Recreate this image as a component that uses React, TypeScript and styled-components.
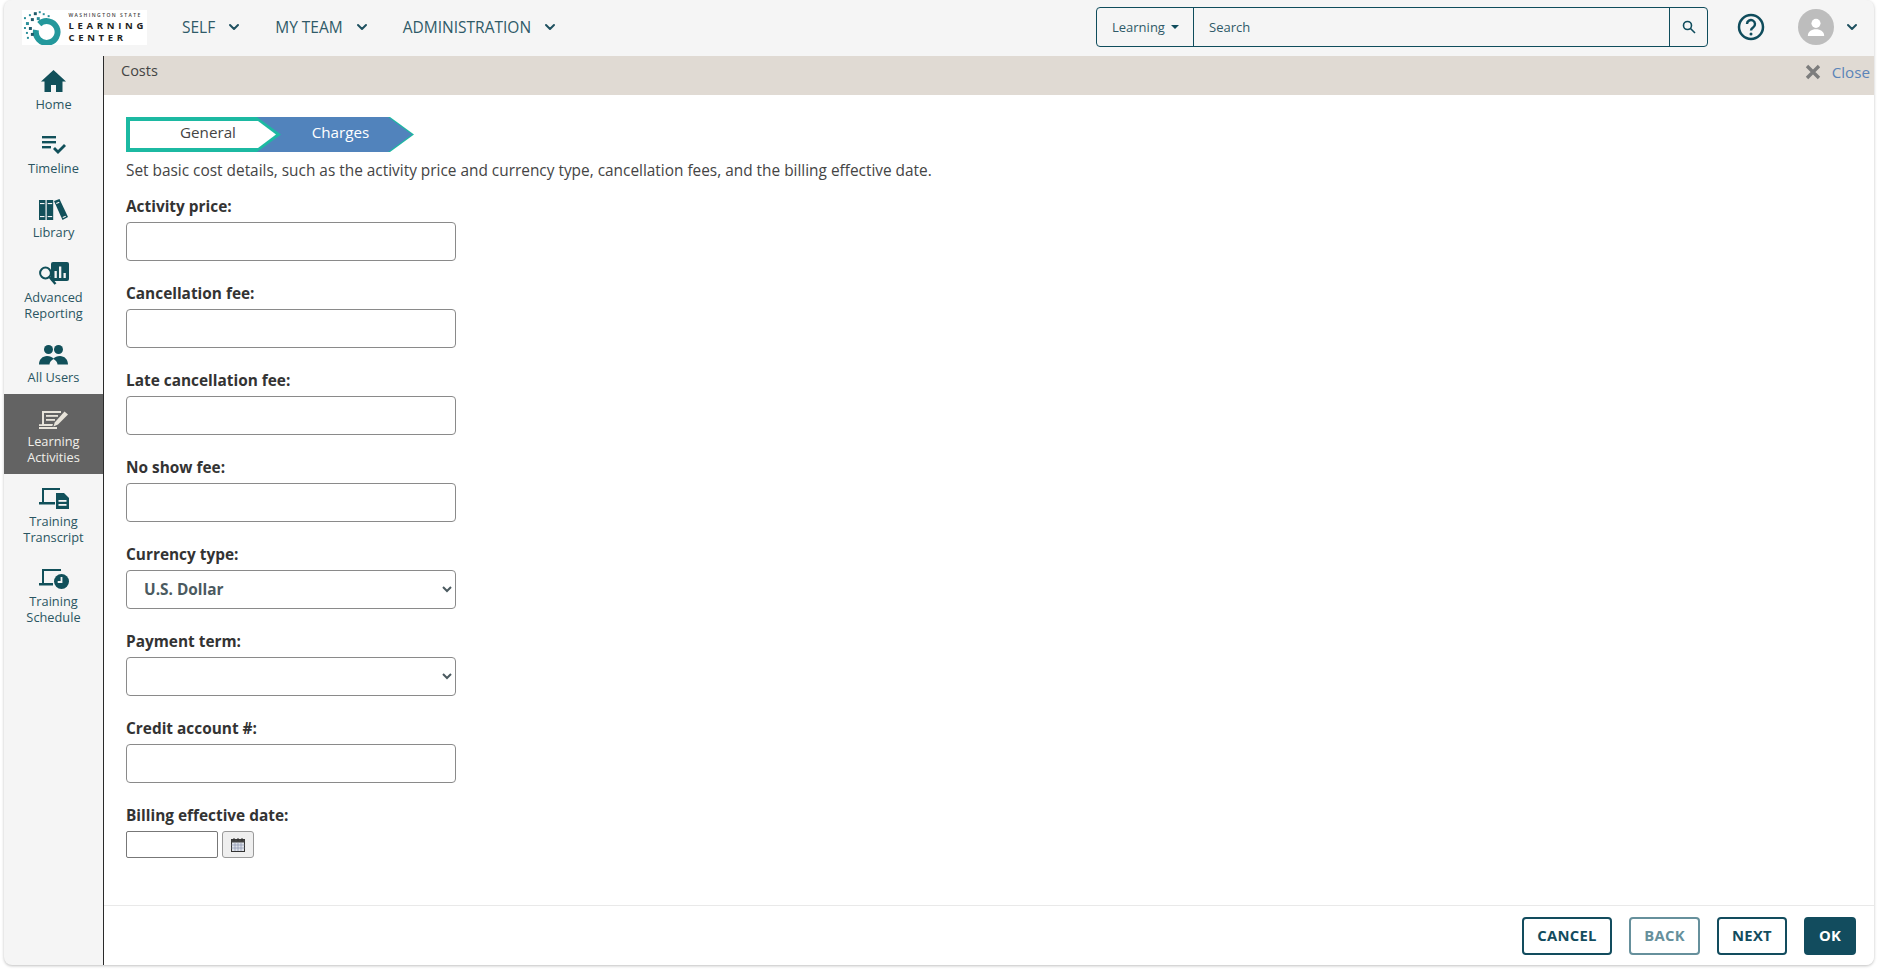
import React from "react";
import styled, { createGlobalStyle } from "styled-components";

const Global = createGlobalStyle`
  html, body { margin: 0; padding: 0; background: #fff; height: 100%; overflow: hidden; }
  body { font-family: "Open Sans", "Noto Sans", sans-serif; color: #333; }
  * { box-sizing: border-box; }
`;

const teal = "#0f4c5c";
const dark = "#11505a";

const Frame = styled.div`
  margin: 0 4px 0 4px;
  height: 965px;
  background: #f5f5f5;
  border-radius: 8px;
  box-shadow: 0 1px 3px rgba(0,0,0,.25);
  display: flex;
  flex-direction: column;
  overflow: hidden;
`;
const Header = styled.header`
  height: 56px;
  flex: none;
  display: flex;
  align-items: center;
  padding-left: 18px;
`;
const LogoBox = styled.div`
  width: 125px;
  height: 35px;
  margin-top: -2px;
  background: #fff;
  display: flex;
  align-items: flex-start;
`;
const LogoText = styled.div`
  margin-left: 1px;
  padding-top: 2px;
  display: flex;
  flex-direction: column;
  color: #222;
`;
const LogoSmall = styled.span`
  font-size: 5px;
  line-height: 6px;
  height: 8px;
  font-weight: 600;
  letter-spacing: 1.45px;
  white-space: nowrap;
  color: #444;
`;
const LogoBig = styled.span`
  font-size: 9.5px;
  line-height: 12px;
  font-weight: 700;
  letter-spacing: 3.7px;
  white-space: nowrap;
`;
const Nav = styled.nav`
  display: flex;
  margin-left: 35px;
  gap: 35px;
`;
const NavItem = styled.div`
  display: flex;
  align-items: center;
  gap: 13px;
  font-size: 15.5px;
  color: #2f5a68;
  margin-top: -3px;
`;
const Right = styled.div`
  margin-left: auto;
  display: flex;
  align-items: center;
  padding-right: 16px;
`;
const SearchBox = styled.div`
  width: 612px;
  height: 40px;
  border: 1px solid ${teal};
  border-radius: 4px;
  display: flex;
  align-items: stretch;
  font-size: 13px;
  color: #2f5a68;
  margin-top: -3px;
`;
const Scope = styled.div`
  width: 97px;
  border-right: 1px solid ${teal};
  display: flex;
  align-items: center;
  padding-left: 15px;
  gap: 6px;
`;
const Caret = styled.span`
  width: 0;
  height: 0;
  border-left: 4px solid transparent;
  border-right: 4px solid transparent;
  border-top: 4px solid ${teal};
`;
const SearchInput = styled.div`
  flex: 1;
  display: flex;
  align-items: center;
  padding-left: 15px;
`;
const SearchBtn = styled.div`
  width: 38px;
  border-left: 1px solid ${teal};
  display: flex;
  align-items: center;
  justify-content: center;
`;
const HelpWrap = styled.div`
  margin-left: 29px;
  margin-top: -3px;
  width: 28px;
  height: 28px;
`;
const Avatar = styled.div`
  margin-left: 33px;
  margin-top: -3px;
  width: 36px;
  height: 36px;
  border-radius: 50%;
  background: #bdbdbd;
  display: flex;
  align-items: center;
  justify-content: center;
  overflow: hidden;
`;
const AvatarChevron = styled.div`
  margin-left: 12px;
  margin-top: -3px;
  display: flex;
`;
const Body = styled.div`
  flex: 1;
  min-height: 0;
  display: flex;
`;
const Sidebar = styled.aside`
  width: 100px;
  flex: none;
  padding-top: 2px;
  border-right: 1px solid #2a2a2a;
  display: flex;
  flex-direction: column;
`;
const SideItem = styled.div<{ $active?: boolean; $tall?: boolean; $tight?: boolean }>`
  height: ${(p) => (p.$tall ? 80 : 64)}px;
  padding-top: ${(p) => (p.$tight ? 9 : 10)}px;
  display: flex;
  flex-direction: column;
  align-items: center;
  text-align: center;
  font-size: 12.8px;
  line-height: 16px;
  background: ${(p) => (p.$active ? "#636363" : "transparent")};
  color: ${(p) => (p.$active ? "#f0efea" : "#2a5562")};
`;
const SideIcon = styled.div`
  height: 25px;
  margin-bottom: 4px;
  display: flex;
  align-items: flex-end;
  justify-content: center;
  svg { display: block; }
`;
const Main = styled.main`
  flex: 1;
  min-width: 0;
  background: #fff;
  display: flex;
  flex-direction: column;
`;
const TitleBar = styled.div`
  height: 39px;
  flex: none;
  background: #e0dad3;
  display: flex;
  align-items: flex-start;
  padding: 5px 4px 0 17px;
  font-size: 14.5px;
  color: #444;
`;
const CloseBtn = styled.div`
  margin-left: auto;
  display: flex;
  align-items: center;
  gap: 11px;
  color: #5b84b8;
  font-size: 15.2px;
  padding-top: 1px;
`;
const Content = styled.div`
  flex: 1;
  min-height: 0;
  padding: 22px 22px 0;
`;
const Steps = styled.div`
  display: flex;
  height: 35px;
`;
const StepOuter = styled.div<{ $w: number; $back?: boolean }>`
  width: ${(p) => p.$w}px;
  height: 35px;
  background: #1cb9a2;
  clip-path: polygon(0 0, calc(100% - 24px) 0, 100% 50%, calc(100% - 24px) 100%, 0 100%);
  position: relative;
  z-index: ${(p) => (p.$back ? 1 : 2)};
  margin-left: ${(p) => (p.$back ? -24 : 0)}px;
`;
const StepInner = styled.div<{ $current?: boolean }>`
  height: ${(p) => (p.$current ? 35 : 27)}px;
  width: calc(100% - ${(p) => (p.$current ? 2 : 9)}px);
  margin: ${(p) => (p.$current ? "0" : "4px 0 0 4px")};
  background: ${(p) => (p.$current ? "#5183bc" : "#fff")};
  color: ${(p) => (p.$current ? "#fff" : "#444")};
  clip-path: polygon(0 0, calc(100% - ${(p) => (p.$current ? 24 : 18)}px) 0, 100% 50%, calc(100% - ${(p) => (p.$current ? 24 : 18)}px) 100%, 0 100%);
  display: flex;
  align-items: center;
  justify-content: center;
  font-size: 15.2px;
  padding: ${(p) => (p.$current ? "0 0 5px 12px" : "0 0 5px 10px")};
`;
const Intro = styled.p`
  margin: 8px 0 0;
  font-size: 15.4px;
  line-height: 22px;
  color: #444;
`;
const Form = styled.div`
  padding-top: 7px;
`;
const Field = styled.div`
  margin-top: 7px;
  height: 80px;
  display: flex;
  flex-direction: column;
`;
const Label = styled.label`
  font-size: 15.4px;
  font-weight: 700;
  line-height: 20px;
  color: #333;
  height: 26px;
  padding-top: 1px;
`;
const TextInput = styled.input`
  width: 330px;
  height: 39px;
  border: 1px solid #8a8a8a;
  border-radius: 4px;
  background: #fff;
  padding: 0 12px;
`;
const Select = styled.select`
  width: 330px;
  height: 39px;
  border: 1px solid #8a8a8a;
  border-radius: 4px;
  background: #fff;
  padding: 0 13px;
  font: 700 15.4px "Open Sans", sans-serif;
  color: #4b5a60;
`;
const DateRow = styled.div`
  display: flex;
  gap: 4px;
`;
const DateInput = styled.input`
  width: 92px;
  height: 27px;
  border: 1px solid #777;
  border-radius: 2px;
  background: #fff;
`;
const CalBtn = styled.div`
  width: 32px;
  height: 27px;
  border: 1px solid #999;
  border-radius: 3px;
  background: #efefef;
  display: flex;
  align-items: center;
  justify-content: center;
`;
const Footer = styled.footer`
  height: 60px;
  flex: none;
  border-top: 1px solid #e9e9e9;
  display: flex;
  align-items: flex-start;
  justify-content: flex-end;
  gap: 17px;
  padding: 11px 18px 0 0;
`;
const Btn = styled.button<{ $w: number; $primary?: boolean; $disabled?: boolean }>`
  width: ${(p) => p.$w}px;
  height: 38px;
  border-radius: 4px;
  border: 2px solid ${(p) => (p.$disabled ? "#66909c" : "#124c5e")};
  background: ${(p) => (p.$primary ? "#124c5e" : "#fff")};
  color: ${(p) => (p.$primary ? "#fff" : p.$disabled ? "#66909c" : "#124c5e")};
  font: 700 14.8px "Open Sans", sans-serif;
  letter-spacing: .3px;
  padding: 0 0 2px;
`;

const Chevron = ({ color = "#1f5160", size = 12 }: { color?: string; size?: number }) => (
  <svg width={size} height={size} viewBox="0 0 12 12" fill="none" stroke={color} strokeWidth="2" strokeLinecap="round" strokeLinejoin="round">
    <path d="M2 4l4 4 4-4" />
  </svg>
);

const Logo = () => (
  <svg width="46" height="35" viewBox="0 0 46 35">
    <path d="M17.500 14A11 11 0 1 1 14.200 20" fill="none" stroke="#23989c" strokeWidth="6" />
    <g fill="#2b8f9a">
      <rect x="12" y="2" width="3" height="3" fill="#1f5a6a" />
      <rect x="7" y="4" width="2" height="2" />
      <rect x="17" y="1" width="2" height="2" />
      <rect x="21" y="3" width="2" height="2" />
      <rect x="26" y="5" width="2" height="2" />
      <rect x="2" y="7" width="2" height="2" />
      <rect x="9" y="8" width="3" height="3" fill="#1f5a6a" />
      <rect x="15" y="7" width="3" height="3" />
      <rect x="4" y="12" width="3" height="3" />
      <rect x="2" y="17" width="2" height="2" />
      <rect x="7" y="17" width="3" height="3" fill="#1f5a6a" />
      <rect x="4" y="22" width="2" height="2" />
      <rect x="9" y="23" width="3" height="3" fill="#1f5a6a" />
      <rect x="5" y="27" width="2" height="2" />
    </g>
  </svg>
);

const icons: Record<string, React.ReactNode> = {
  home: (
    <svg width="25" height="22" viewBox="0 0 25 22" fill={dark}>
      <path d="M12.500 0L0 11.500h3.500V22h6.500v-7h5v7h6.500V11.500H25z" />
    </svg>
  ),
  timeline: (
    <svg width="24" height="20" viewBox="0 0 24 20" fill={dark}>
      <rect x="0" y="0" width="14" height="2.400" />
      <rect x="0" y="5" width="14" height="2.400" />
      <rect x="0" y="10" width="9" height="2.400" />
      <path d="M11 13l2-2 3 3 6-6 2 2-8 8z" />
    </svg>
  ),
  library: (
    <svg width="29" height="21" viewBox="0 0 29 21" fill={dark}>
      <path d="M0 1h6.500v20H0zM7.700 1h6.500v20H7.700z" />
      <path d="M15 2l5.500-2 8.500 18-5.500 3z" />
      <g fill="#f5f5f5">
        <rect x="1" y="4" width="4.500" height="1.100" />
        <rect x="8.700" y="4" width="4.500" height="1.100" />
        <rect x="1" y="17" width="4.500" height="1.100" />
        <rect x="8.700" y="17" width="4.500" height="1.100" />
        <path d="M17 4l3-1.300.5 1.100-3 1.300zM23.500 18l3-1.300.5 1.100-3 1.300z" />
      </g>
    </svg>
  ),
  reporting: (
    <svg width="30" height="23" viewBox="0 0 30 23">
      <rect x="12" y="0" width="18" height="19" rx="2" fill={dark} />
      <g fill="#f5f5f5">
        <rect x="15.500" y="9" width="2.300" height="7" />
        <rect x="20" y="4.500" width="2.300" height="11.500" />
        <rect x="24.500" y="11" width="2.300" height="5" />
      </g>
      <circle cx="6.500" cy="11" r="5.400" fill="#f5f5f5" stroke={dark} strokeWidth="2" />
      <path d="M10.500 15l6 7" stroke={dark} strokeWidth="2.400" />
    </svg>
  ),
  users: (
    <svg width="29" height="20" viewBox="0 0 29 20" fill={dark}>
      <circle cx="9.500" cy="4.500" r="4.500" />
      <circle cx="19.500" cy="4.500" r="4.500" />
      <path d="M0 19.500c0-5 3.500-8.500 8-8.500 3 0 5 1 6.500 2.500C16 12 18 11 21 11c4.500 0 8 3.500 8 8.500H18.500c0-2-1.500-4-4-5.500-2.500 1.500-4 3.500-4 5.500z" />
    </svg>
  ),
  activities: (
    <svg width="30" height="18" viewBox="0 0 30 18">
      <path d="M3 0h19v2H5v11h9l-.7 2H0v-1.800h3z M16 16h2v2H0v-2z" fill="#e8e4da" />
      <g fill="#e8e4da">
        <rect x="7" y="4" width="12" height="1.800" />
        <rect x="7" y="8" width="9" height="1.800" />
      </g>
      <path d="M14.500 15.500l1.200-4L25.500.5l3.500 3L19 13.500z" fill="#e8e4da" />
    </svg>
  ),
  transcript: (
    <svg width="30" height="21" viewBox="0 0 30 21">
      <path d="M3 0h18v2H5v12h11v2.500H0v-2.500h3z" fill={dark} />
      <path d="M17 5h8l5 5v11H17z" fill={dark} />
      <rect x="19.500" y="12" width="8" height="1.800" fill="#f5f5f5" />
      <rect x="19.500" y="16" width="8" height="1.800" fill="#f5f5f5" />
    </svg>
  ),
  schedule: (
    <svg width="30" height="20" viewBox="0 0 30 20">
      <path d="M3 0h19v2H5v12h9v2.500H0v-2.500h3z" fill={dark} />
      <circle cx="22.500" cy="12.500" r="7.500" fill={dark} />
      <path d="M22.500 8V13h-3.800" fill="none" stroke="#f5f5f5" strokeWidth="1.800" />
    </svg>
  ),
};

const sideItems: { key: string; lines: string[]; active?: boolean; tight?: boolean }[] = [
  { key: "home", lines: ["Home"], tight: true },
  { key: "timeline", lines: ["Timeline"], tight: true },
  { key: "library", lines: ["Library"], tight: true },
  { key: "reporting", lines: ["Advanced", "Reporting"] },
  { key: "users", lines: ["All Users"] },
  { key: "activities", lines: ["Learning", "Activities"], active: true },
  { key: "transcript", lines: ["Training", "Transcript"] },
  { key: "schedule", lines: ["Training", "Schedule"] },
];

const textFieldsTop = ["Activity price:", "Cancellation fee:", "Late cancellation fee:", "No show fee:"];

export default function App() {
  return (
    <>
      <Global />
      <Frame>
        <Header>
          <LogoBox>
            <Logo />
            <LogoText>
              <LogoSmall>WASHINGTON STATE</LogoSmall>
              <LogoBig>LEARNING</LogoBig>
              <LogoBig>CENTER</LogoBig>
            </LogoText>
          </LogoBox>
          <Nav>
            {["SELF", "MY TEAM", "ADMINISTRATION"].map((t) => (
              <NavItem key={t}>
                {t}
                <Chevron />
              </NavItem>
            ))}
          </Nav>
          <Right>
            <SearchBox>
              <Scope>
                Learning
                <Caret />
              </Scope>
              <SearchInput>Search</SearchInput>
              <SearchBtn>
                <svg width="14" height="14" viewBox="0 0 14 14" fill="none" stroke={teal} strokeWidth="1.600">
                  <circle cx="5.500" cy="5.500" r="4" />
                  <path d="M8.500 8.500l4.500 4.500" />
                </svg>
              </SearchBtn>
            </SearchBox>
            <HelpWrap>
              <svg width="28" height="28" viewBox="0 0 28 28" fill="none">
                <circle cx="14" cy="14" r="12" stroke={teal} strokeWidth="2.500" />
                <path d="M10 11a4 4 0 1 1 6.300 3.300c-1.500 1-2.300 1.700-2.300 3.200" stroke={teal} strokeWidth="2.400" />
                <circle cx="14" cy="21" r="1.500" fill={teal} />
              </svg>
            </HelpWrap>
            <Avatar>
              <svg width="20" height="20" viewBox="0 0 22 22" fill="#fff">
                <circle cx="11" cy="7" r="5" />
                <path d="M2 21c0-5 4-7.500 9-7.500s9 2.500 9 7.500z" />
              </svg>
            </Avatar>
            <AvatarChevron>
              <Chevron />
            </AvatarChevron>
          </Right>
        </Header>
        <Body>
          <Sidebar>
            {sideItems.map((s) => (
              <SideItem key={s.key} $active={s.active} $tall={s.lines.length > 1} $tight={s.tight}>
                <SideIcon>{icons[s.key]}</SideIcon>
                {s.lines.map((l) => (
                  <span key={l}>{l}</span>
                ))}
              </SideItem>
            ))}
          </Sidebar>
          <Main>
            <TitleBar>
              Costs
              <CloseBtn>
                <svg width="16" height="16" viewBox="0 0 16 16" stroke="#7d7d7d" strokeWidth="3.400">
                  <path d="M2 2l12 12M14 2L2 14" />
                </svg>
                Close
              </CloseBtn>
            </TitleBar>
            <Content>
              <Steps>
                <StepOuter $w={155}>
                  <StepInner>General</StepInner>
                </StepOuter>
                <StepOuter $w={157} $back>
                  <StepInner $current>Charges</StepInner>
                </StepOuter>
              </Steps>
              <Intro>Set basic cost details, such as the activity price and currency type, cancellation fees, and the billing effective date.</Intro>
              <Form>
                {textFieldsTop.map((l) => (
                  <Field key={l}>
                    <Label>{l}</Label>
                    <TextInput />
                  </Field>
                ))}
                <Field>
                  <Label>Currency type:</Label>
                  <Select defaultValue="usd">
                    <option value="usd">U.S. Dollar</option>
                  </Select>
                </Field>
                <Field>
                  <Label>Payment term:</Label>
                  <Select defaultValue="">
                    <option value=""></option>
                  </Select>
                </Field>
                <Field>
                  <Label>Credit account #:</Label>
                  <TextInput />
                </Field>
                <Field>
                  <Label>Billing effective date:</Label>
                  <DateRow>
                    <DateInput />
                    <CalBtn>
                      <svg width="14" height="15" viewBox="0 0 14 15">
                        <rect x="0.500" y="2.500" width="13" height="12" fill="#dfe3ea" stroke="#333" />
                        <rect x="0.500" y="2.500" width="13" height="3" fill="#444" />
                        <path d="M3 1v3M7 1v3M11 1v3" stroke="#333" />
                        <path d="M0.500 8h13M0.500 11h13M4 6v8M7 6v8M10 6v8" stroke="#8a93b0" strokeWidth=".7" />
                      </svg>
                    </CalBtn>
                  </DateRow>
                </Field>
              </Form>
            </Content>
            <Footer>
              <Btn $w={90}>CANCEL</Btn>
              <Btn $w={71} $disabled>BACK</Btn>
              <Btn $w={70}>NEXT</Btn>
              <Btn $w={52} $primary>OK</Btn>
            </Footer>
          </Main>
        </Body>
      </Frame>
    </>
  );
}
